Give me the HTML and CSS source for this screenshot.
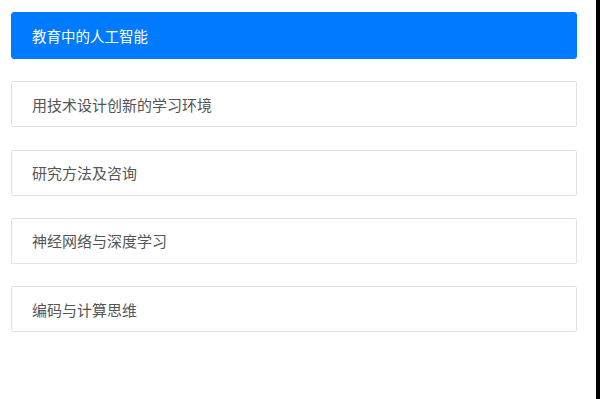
FILE: index.html
```html
<!DOCTYPE html>
<html lang="zh-CN">
<head>
<meta charset="UTF-8" />
<meta name="viewport" content="width=device-width, initial-scale=1" />
<title>课程列表</title>
<link rel="stylesheet" href="styles.css">
</head>
<body>
  <main class="page">
    <ul class="course-list">
      <li class="course active">教育中的人工智能</li>
      <li class="course">用技术设计创新的学习环境</li>
      <li class="course">研究方法及咨询</li>
      <li class="course">神经网络与深度学习</li>
      <li class="course">编码与计算思维</li>
    </ul>
  </main>
</body>
</html>
```

FILE: styles.css
```css
*, *::before, *::after {
  box-sizing: border-box;
}
html {
  background: #000;
}
body {
  margin: 0;
  font-family: "Noto Sans CJK SC", "Noto Sans", sans-serif;
}
.page {
  width: 596px;
  min-height: 100vh;
  background: #fff;
  padding: 12px 19px 0 11px;
}
.course-list {
  list-style: none;
  margin: 0;
  padding: 0;
  display: flex;
  flex-direction: column;
  gap: 22.3px;
}
.course {
  height: 46px;
  display: flex;
  align-items: center;
  padding: 0 20px;
  border: 1px solid #e2e2e2;
  border-radius: 2px;
  font-size: 15px;
  color: #555;
}
.course.active {
  height: 47px;
  background: #007bff;
  border-color: #007bff;
  border-radius: 3px;
  font-size: 14.5px;
  color: #fff;
}
```
